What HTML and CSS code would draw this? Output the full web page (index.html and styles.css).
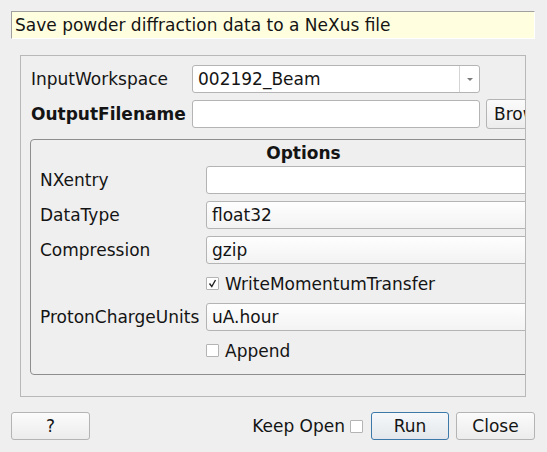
FILE: index.html
```html
<!DOCTYPE html>
<html>
<head>
<meta charset="utf-8">
<link rel="stylesheet" href="styles.css">
</head>
<body>
<div class="dialog">
  <div class="desc">Save powder diffraction data to a NeXus file</div>
  <div class="scroll">
    <div class="content">
      <div class="row r1">
        <span class="lbl">InputWorkspace</span>
        <div class="combo main">
          <span class="val">002192_Beam</span>
          <span class="arrow"><svg width="8" height="5" viewBox="0 0 8 5"><path d="M1 1h6L4 4z" fill="#7a7a7a"/></svg></span>
        </div>
      </div>
      <div class="row r2">
        <span class="lbl bold">OutputFilename</span>
        <div class="input main"></div>
        <div class="btn browse">Browse</div>
      </div>
      <div class="group">
        <div class="gtitle">Options</div>
        <div class="grow"><span class="glbl">NXentry</span><div class="input field"></div></div>
        <div class="grow"><span class="glbl">DataType</span><div class="combo field"><span class="val">float32</span></div></div>
        <div class="grow"><span class="glbl">Compression</span><div class="combo field"><span class="val">gzip</span></div></div>
        <div class="grow crow"><span class="glbl"></span><span class="check on"><svg width="9" height="9" viewBox="0 0 9 9"><path d="M1.5 4.5 L3.8 7.5 L7.5 1" fill="none" stroke="#222" stroke-width="1.4"/></svg></span><span class="ctext">WriteMomentumTransfer</span></div>
        <div class="grow"><span class="glbl">ProtonChargeUnits</span><div class="combo field"><span class="val">uA.hour</span></div></div>
        <div class="grow crow"><span class="glbl"></span><span class="check"></span><span class="ctext">Append</span></div>
      </div>
    </div>
  </div>
  <div class="bottom">
    <div class="btn help">?</div>
    <div class="spacer"></div>
    <span class="keep">Keep Open</span>
    <span class="check keepbox"></span>
    <div class="btn run">Run</div>
    <div class="btn close">Close</div>
  </div>
</div>
</body>
</html>
```
FILE: styles.css
```css
html, body {
  margin: 0;
  padding: 0;
  background: #efefef;
}
body {
  font-family: "DejaVu Sans", sans-serif;
  font-size: 17px;
  color: #141414;
  width: 547px;
  height: 452px;
  overflow: hidden;
}
.dialog {
  display: flex;
  flex-direction: column;
  padding: 11px 12px 0 11px;
}
.desc {
  height: 26px;
  background: #ffffdf;
  border-top: 1px solid #a0a0a0;
  border-left: 1px solid #a0a0a0;
  border-bottom: 1px solid #ffffff;
  border-right: 1px solid #ffffff;
  padding-left: 3px;
  line-height: 26px;
  white-space: nowrap;
}
.scroll {
  margin-top: 16px;
  margin-left: 9px;
  width: 504px;
  height: 340px;
  border: 1px solid #b8b8b8;
  overflow: hidden;
}
.content {
  width: 600px;
  padding: 9px 0 0 9px;
}
.row {
  display: flex;
  align-items: center;
}
.r1 { height: 28px; }
.r2 { height: 28px; margin-top: 7px; }
.lbl {
  width: 161px;
  padding-left: 1px;
  white-space: nowrap;
}
.bold { font-weight: bold; }
.main { width: 288px; }
.combo, .input {
  box-sizing: border-box;
  border: 1px solid #b4b4b4;
  border-radius: 3px;
  display: flex;
  align-items: center;
}
.input { background: #ffffff; }
.combo { background: linear-gradient(#fefefe, #f3f3f3); }
.combo.main { background: #ffffff; height: 28px; }
.input.main { height: 28px; }
.val {
  flex: 1;
  padding-left: 5px;
  white-space: nowrap;
}
.arrow {
  width: 19px;
  height: 100%;
  border-left: 1px solid #d4d4d4;
  display: flex;
  align-items: center;
  justify-content: center;
}
.btn {
  box-sizing: border-box;
  border: 1px solid #b4b4b4;
  border-radius: 3px;
  background: linear-gradient(#fbfbfb, #ececec);
  display: flex;
  align-items: center;
  justify-content: center;
  white-space: nowrap;
}
.browse {
  margin-left: 6px;
  width: 80px;
  height: 30px;
  flex: none;
  justify-content: flex-start;
  padding-left: 7px;
}
.group {
  margin-top: 11px;
  width: 547px;
  height: 236px;
  border: 1px solid #8e8e8e;
  border-radius: 4px;
  box-sizing: border-box;
  padding-left: 9px;
  display: flex;
  flex-direction: column;
  gap: 7px;
}
.gtitle {
  height: 19px;
  line-height: 26px;
  text-align: center;
  font-weight: bold;
  margin-left: -9px;
}
.grow {
  display: flex;
  align-items: center;
  height: 28px;
}
.crow { height: 25px; }
.glbl {
  width: 166px;
  flex: none;
  white-space: nowrap;
}
.field {
  width: 360px;
  height: 28px;
}
.check {
  box-sizing: border-box;
  width: 13px;
  height: 13px;
  border: 1px solid #b4b4b4;
  border-radius: 1px;
  background: #ffffff;
  display: inline-flex;
  align-items: center;
  justify-content: center;
  flex: none;
}
.ctext {
  margin-left: 6px;
  white-space: nowrap;
}
.bottom {
  margin-top: 15px;
  display: flex;
  align-items: center;
  height: 28px;
}
.help { width: 79px; height: 28px; }
.spacer { flex: 1; }
.keep { white-space: nowrap; }
.keepbox { margin-left: 5px; margin-right: 8px; }
.run {
  width: 78px;
  height: 28px;
  border-color: #3c78a8;
  background: linear-gradient(#f6f8fa, #e3e7eb);
}
.close {
  width: 79px;
  height: 28px;
  margin-left: 7px;
}
```
